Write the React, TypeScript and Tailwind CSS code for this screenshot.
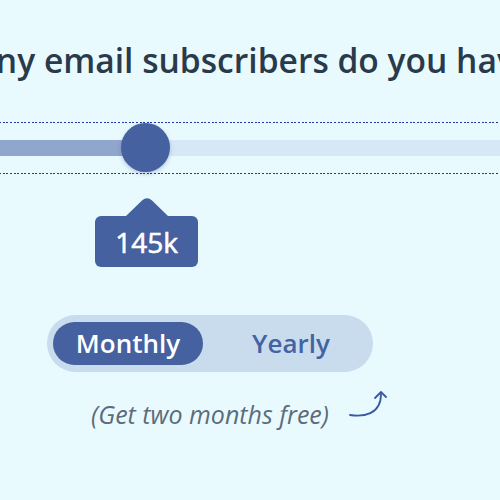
import React from "react";

const dots =
  "h-px w-full bg-[repeating-linear-gradient(90deg,#1f38a6_0px,#1f38a6_2px,transparent_2px,transparent_3.6px)]";

export default function App() {
  return (
    <div
      className="w-[500px] h-[500px] overflow-hidden bg-[#e9faff]"
      style={{ fontFamily: '"Open Sans", "Noto Sans", sans-serif' }}
    >
      <div className="w-[760px] ml-[-170px] flex flex-col items-center">
        <h2 className="mt-[40px] ml-[-8px] whitespace-nowrap text-[33.6px] leading-[40px] font-semibold text-[#2a3a4a]">
          How many email subscribers do you have?
        </h2>

        <div className="mt-[42px] w-full">
          <div className={dots} />
          <div className="relative h-[50px] flex items-center">
            <div className="h-4 w-full bg-[#d6e8f5] flex">
              <div className="h-full w-[315px] bg-[#91a6cd]" />
            </div>
            <div className="absolute left-[291px] top-0 w-[49px] h-[49px] rounded-full bg-[#4561a0] shadow-[0_2px_4px_rgba(40,60,110,0.25)]" />
          </div>
          <div className={dots} />
        </div>

        <div className="self-start ml-[265px] mt-[23px] flex flex-col items-center w-[103px]">
          <svg width="42" height="19" viewBox="0 0 42 19" className="block">
            <path d="M0 19 L16 3.5 Q21 -1 26 3.5 L42 19 Z" fill="#4561a0" />
          </svg>
          <div className="w-[103px] h-[51px] rounded-md bg-[#4561a0] flex items-center justify-center text-white text-[28px] leading-none [-webkit-text-stroke:0.6px_white]">
            145k
          </div>
        </div>

        <div className="mt-[48px] w-[326px] h-[57px] rounded-full bg-[#c9dcee] px-[6px] py-[7px] flex">
          <div className="w-[150px] h-[43px] rounded-full bg-[#4561a0] flex items-center justify-center text-white text-[26px] font-semibold">
            Monthly
          </div>
          <div className="flex-1 pl-[12px] flex items-center justify-center text-[#4562a3] text-[26px] font-semibold">
            Yearly
          </div>
        </div>

        <div className="relative mt-[27px]">
          <p className="italic text-[25px] leading-[30px] text-[#5c6c7a] whitespace-nowrap">
            (Get two months free)
          </p>
          <svg
            width="42"
            height="32"
            viewBox="0 0 42 32"
            className="absolute left-[256px] top-[-12px]"
            fill="none"
            stroke="#3a59a3"
            strokeWidth="1.8"
            strokeLinecap="round"
            strokeLinejoin="round"
          >
            <path d="M3 28 C 16 30, 34 28, 34 7" />
            <path d="M28 11 L34 5 L39 10" />
          </svg>
        </div>
      </div>
    </div>
  );
}
